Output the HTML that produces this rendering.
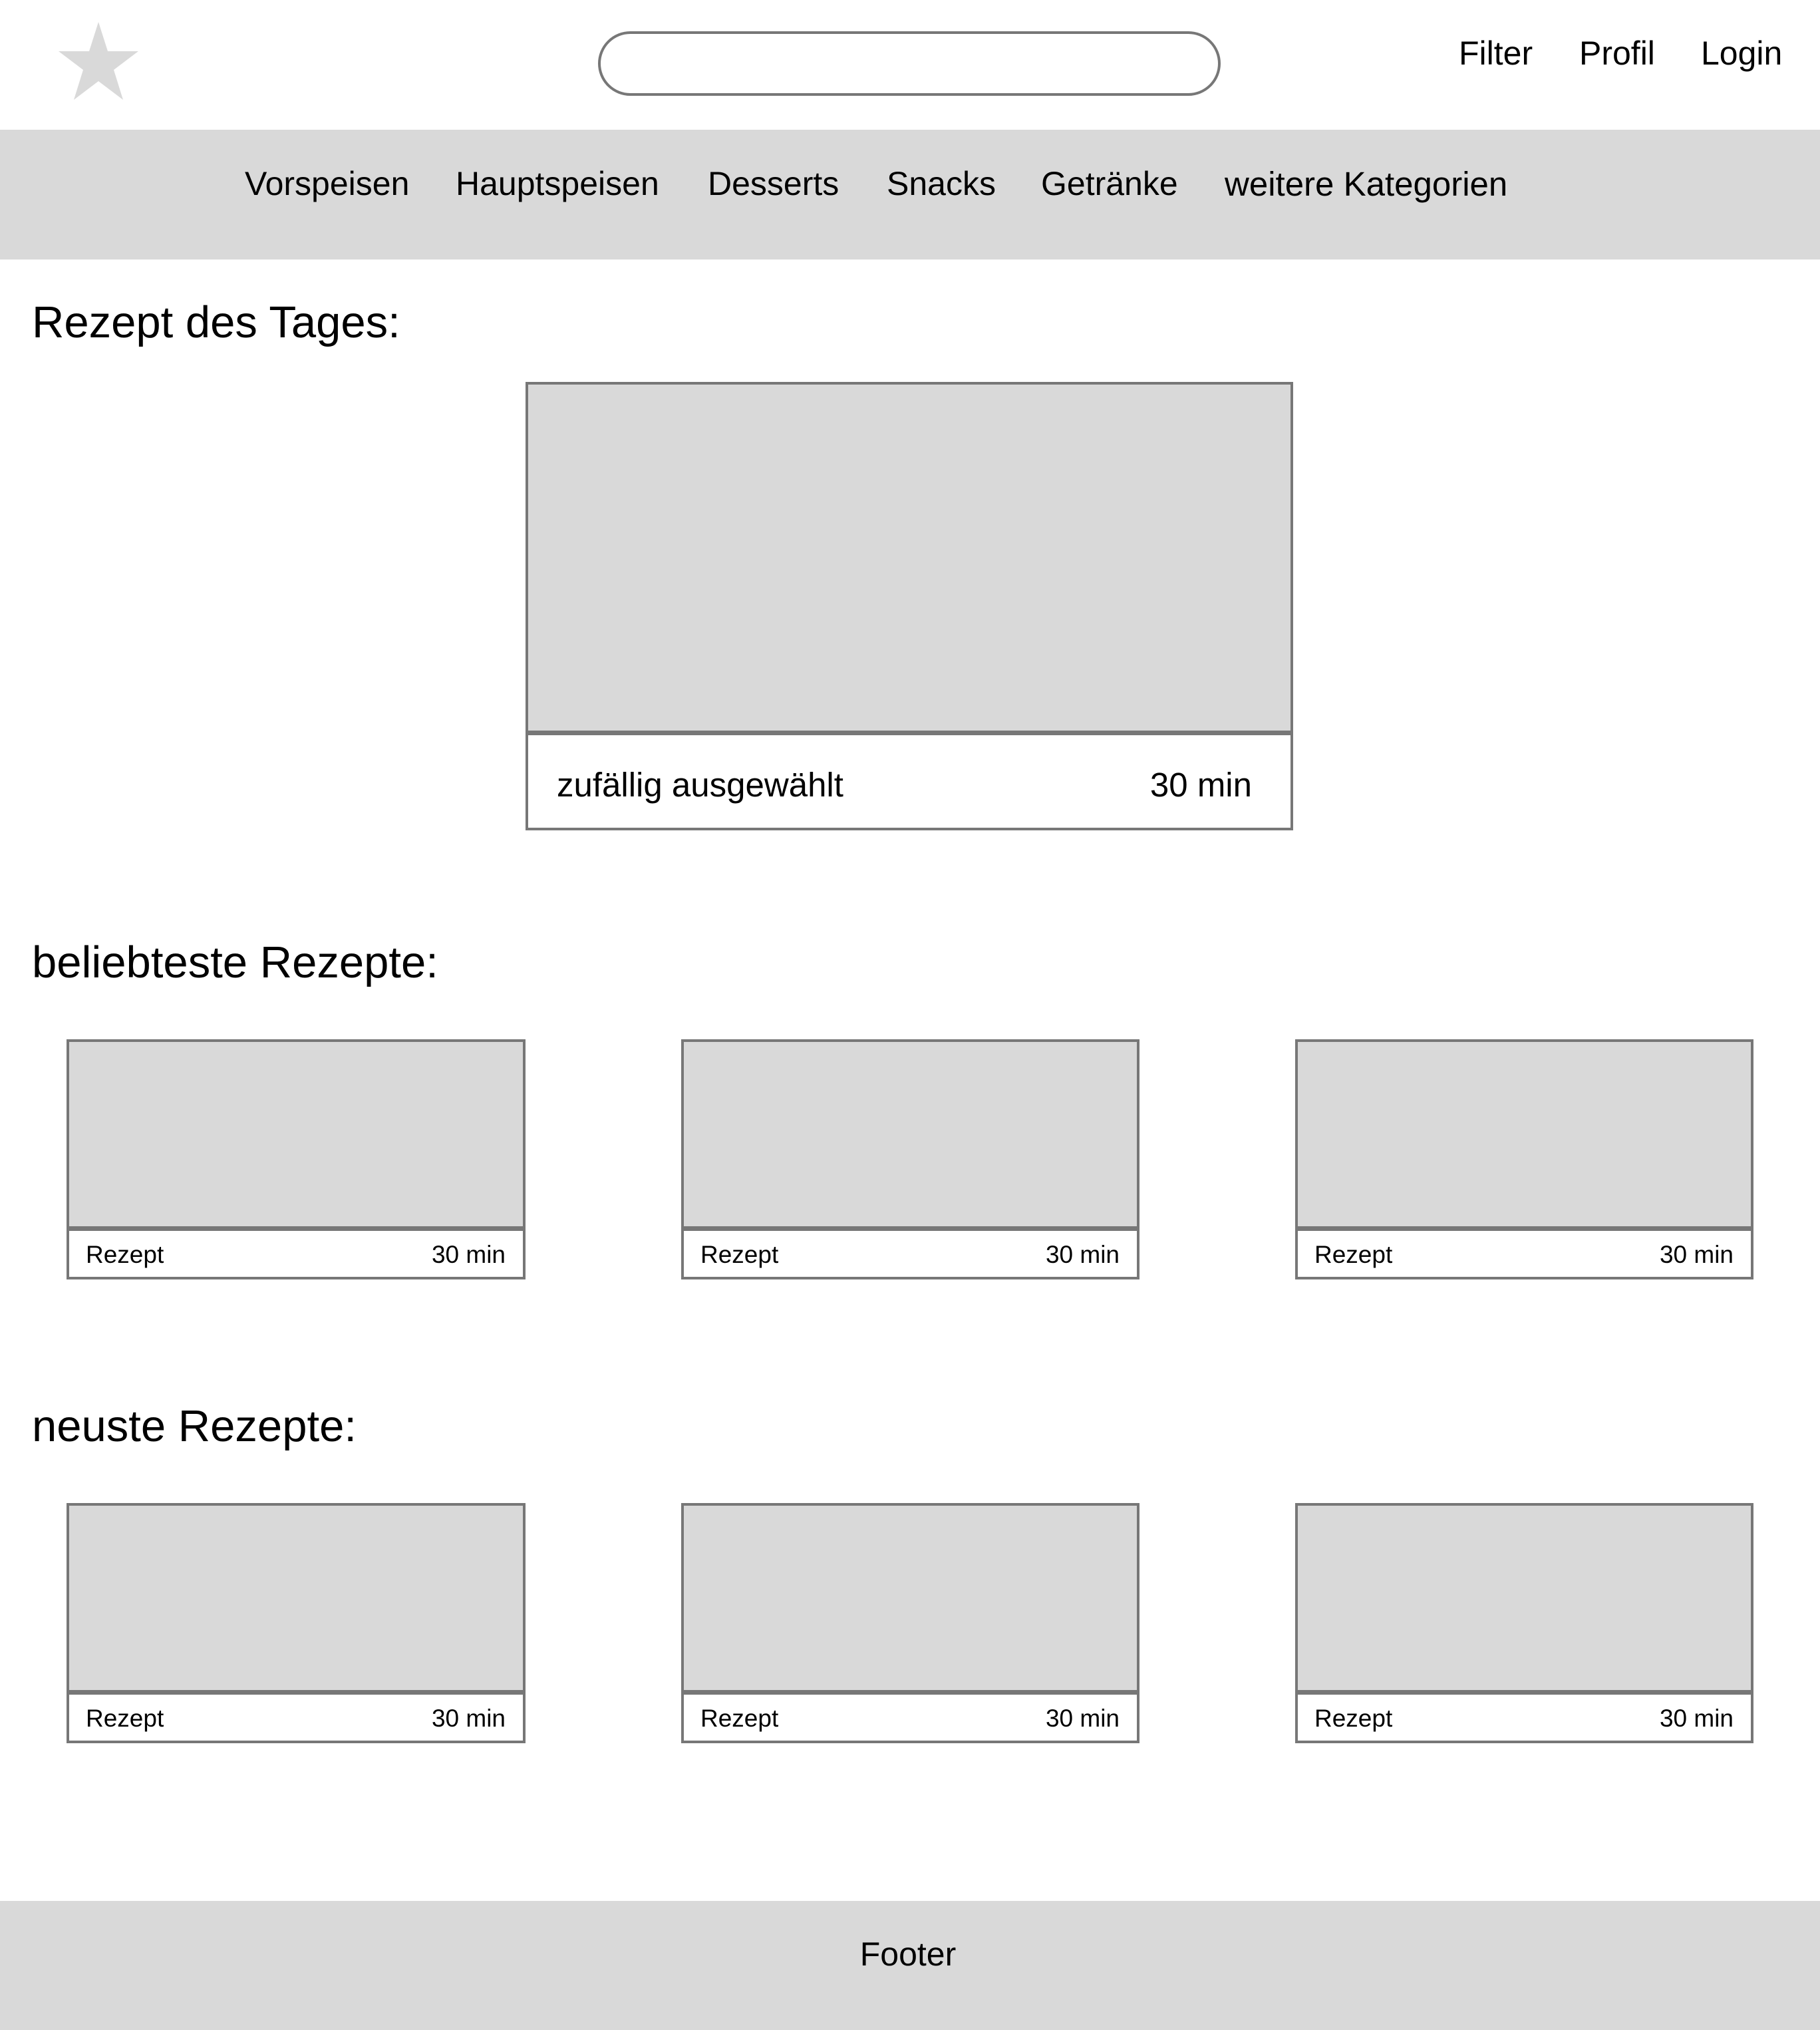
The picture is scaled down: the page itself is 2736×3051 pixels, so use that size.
<!DOCTYPE html>
<html><head><meta charset="utf-8"><style>
*{margin:0;padding:0;box-sizing:border-box}
body{width:2736px;height:3051px;position:relative;background:#fff;font-family:"Liberation Sans",sans-serif;color:#000;overflow:hidden}
.a{position:absolute}
.t{position:absolute;white-space:nowrap;line-height:1}
.card{position:absolute;border:4px solid #777;background:#fff}
.card .img{position:absolute;left:0;right:0;top:0;background:#d9d9d9;border-bottom:7px solid #777}
.card .l,.card .r{position:absolute;line-height:1;white-space:nowrap}
</style></head><body>
<svg class="a" style="left:88px;top:33px" width="120" height="117" viewBox="0 0 120 117"><polygon points="60,0 74,44 120,44 83,72 97,117 60,89 23,117 37,72 0,44 46,44" fill="#d9d9d9"/></svg>
<div class="a" style="left:899px;top:47px;width:936px;height:97px;border:4px solid #777;border-radius:49px"></div>
<div class="t" style="left:2193px;top:55px;font-size:50px">Filter</div>
<div class="t" style="left:2374px;top:55px;font-size:50px">Profil</div>
<div class="t" style="left:2557px;top:55px;font-size:50px">Login</div>
<div class="a" style="left:0;top:195px;width:2736px;height:195px;background:#d9d9d9"></div>
<div class="t" style="left:368px;top:251px;font-size:50px">Vorspeisen</div>
<div class="t" style="left:685px;top:251px;font-size:50px">Hauptspeisen</div>
<div class="t" style="left:1064px;top:251px;font-size:50px">Desserts</div>
<div class="t" style="left:1333px;top:251px;font-size:50px">Snacks</div>
<div class="t" style="left:1565px;top:251px;font-size:50px">Getränke</div>
<div class="t" style="left:1841px;top:251px;font-size:51px">weitere Kategorien</div>
<div class="t" style="left:48px;top:451px;font-size:67px">Rezept des Tages:</div>
<div class="card" style="left:790px;top:574px;width:1154px;height:674px">
 <div class="img" style="height:527px"></div>
 <div class="l" style="left:43px;top:576px;font-size:51px">zufällig ausgewählt</div>
 <div class="r" style="right:58px;top:576px;font-size:51px">30 min</div>
</div>
<div class="t" style="left:48px;top:1413px;font-size:67px">beliebteste Rezepte:</div>
<div class="t" style="left:48px;top:2110px;font-size:67px">neuste Rezepte:</div>

<div class="card" style="left:100px;top:1562px;width:690px;height:361px"><div class="img" style="height:284px"></div><div class="l" style="left:25px;top:301px;font-size:37px">Rezept</div><div class="r" style="right:26px;top:301px;font-size:37px">30 min</div></div>
<div class="card" style="left:1024px;top:1562px;width:689px;height:361px"><div class="img" style="height:284px"></div><div class="l" style="left:25px;top:301px;font-size:37px">Rezept</div><div class="r" style="right:26px;top:301px;font-size:37px">30 min</div></div>
<div class="card" style="left:1947px;top:1562px;width:689px;height:361px"><div class="img" style="height:284px"></div><div class="l" style="left:25px;top:301px;font-size:37px">Rezept</div><div class="r" style="right:26px;top:301px;font-size:37px">30 min</div></div>

<div class="card" style="left:100px;top:2259px;width:690px;height:361px"><div class="img" style="height:284px"></div><div class="l" style="left:25px;top:301px;font-size:37px">Rezept</div><div class="r" style="right:26px;top:301px;font-size:37px">30 min</div></div>
<div class="card" style="left:1024px;top:2259px;width:689px;height:361px"><div class="img" style="height:284px"></div><div class="l" style="left:25px;top:301px;font-size:37px">Rezept</div><div class="r" style="right:26px;top:301px;font-size:37px">30 min</div></div>
<div class="card" style="left:1947px;top:2259px;width:689px;height:361px"><div class="img" style="height:284px"></div><div class="l" style="left:25px;top:301px;font-size:37px">Rezept</div><div class="r" style="right:26px;top:301px;font-size:37px">30 min</div></div>

<div class="a" style="left:0;top:2857px;width:2736px;height:194px;background:#d9d9d9"></div>
<div class="t" style="left:0;width:2730px;text-align:center;top:2912px;font-size:50px">Footer</div>
</body></html>
